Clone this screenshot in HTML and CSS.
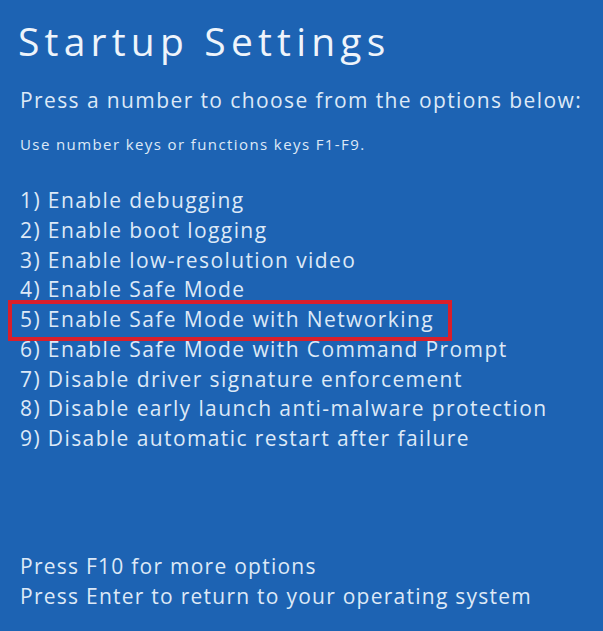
FILE: index.html
```html
<!DOCTYPE html>
<html lang="en">
<head>
  <meta charset="UTF-8">
  <meta name="viewport" content="width=device-width, initial-scale=1.0">
  <title>Startup Settings</title>
  <link rel="stylesheet" href="styles.css">
</head>
<body>
  <div class="screen">
    <h1 class="title">Startup Settings</h1>
    <p class="prompt">Press a number to choose from the options below:</p>
    <p class="hint">Use number keys or functions keys F1-F9.</p>
    <ul class="options">
      <li>1) Enable debugging</li>
      <li>2) Enable boot logging</li>
      <li>3) Enable low-resolution video</li>
      <li>4) Enable Safe Mode</li>
      <li><span class="selected">5) Enable Safe Mode with Networking</span></li>
      <li>6) Enable Safe Mode with Command Prompt</li>
      <li>7) Disable driver signature enforcement</li>
      <li>8) Disable early launch anti-malware protection</li>
      <li>9) Disable automatic restart after failure</li>
    </ul>
    <div class="footer">
      <p>Press F10 for more options</p>
      <p>Press Enter to return to your operating system</p>
    </div>
  </div>
</body>
</html>
```

FILE: styles.css
```css
body {
  margin: 0;
  background-color: #1d63b3;
  color: #dde9f7;
  font-family: 'Open Sans', 'Noto Sans', sans-serif;
  min-height: 100vh;
}
.screen {
  padding: 17px 20px 0 20px;
}
.title {
  margin: 0 0 0 -2px;
  font-size: 39px;
  line-height: 48px;
  font-weight: 400;
  letter-spacing: 5.2px;
  color: #eef4fb;
}
.prompt {
  margin: 20px 0 0 0;
  font-size: 21px;
  line-height: 30px;
  letter-spacing: 1.4px;
}
.hint {
  margin: 19px 0 0 0;
  font-size: 15px;
  line-height: 20px;
  letter-spacing: 1.4px;
}
.options {
  list-style: none;
  margin: 32px 0 0 0;
  padding: 0;
}
.options li {
  font-size: 21px;
  line-height: 29.75px;
  letter-spacing: 1.4px;
  white-space: nowrap;
}
.selected {
  display: inline-block;
  border: 4px solid #da1f2b;
  padding: 1px 14px 2px 8px;
  margin: -5px 0 -6px -12px;
  line-height: 29.75px;
}
.footer {
  margin-top: 97px;
}
.footer p {
  margin: 0;
  font-size: 21px;
  line-height: 30px;
  letter-spacing: 1.25px;
}
```
